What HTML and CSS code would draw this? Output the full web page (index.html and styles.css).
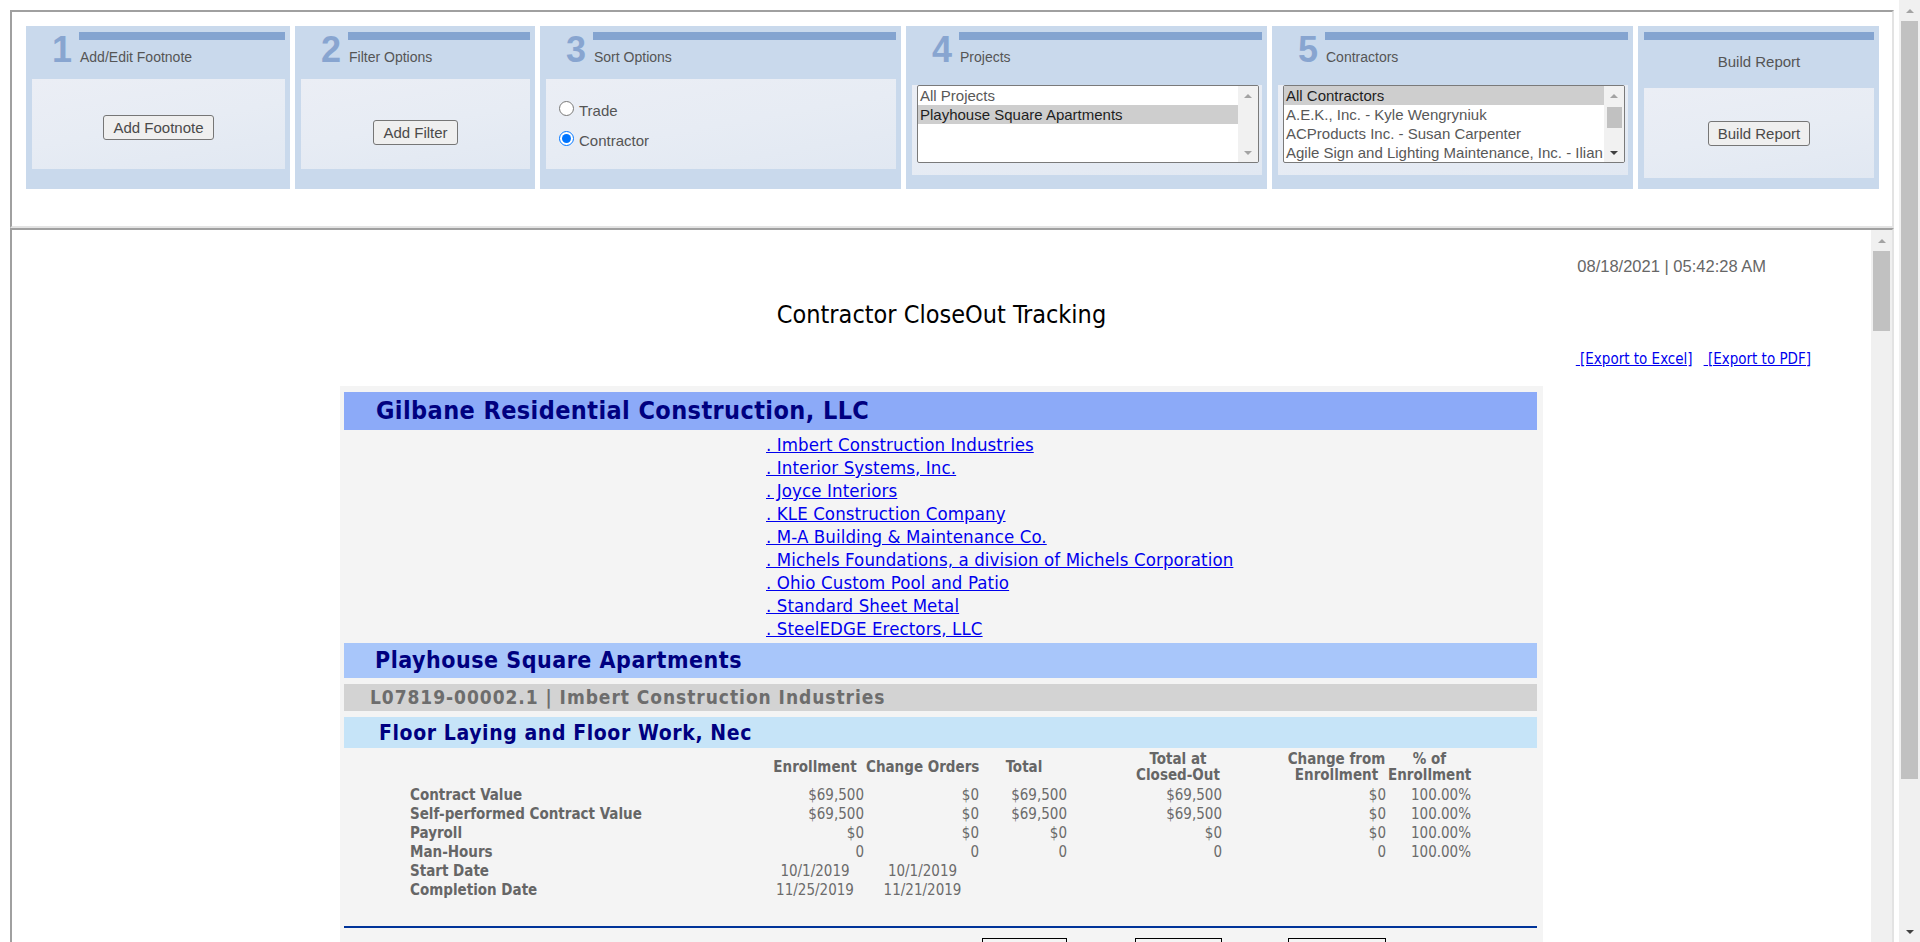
FILE: index.html
```html
<!DOCTYPE html>
<html lang="en">
<head>
<meta charset="utf-8">
<title>Contractor CloseOut Tracking</title>
<link rel="stylesheet" href="styles.css">
</head>
<body>
<div class="viewport">
  <div class="page">
    <div class="frame frame-top">
      <div class="panels">
        <section class="panel w264">
          <div class="phead">
            <div class="pnum">1</div>
            <div class="pside"><div class="stripe"></div><div class="ptitle">Add/Edit Footnote</div></div>
          </div>
          <div class="pbox pbox-center shift-a"><button class="btn" type="button">Add Footnote</button></div>
        </section>
        <section class="panel w240">
          <div class="phead">
            <div class="pnum">2</div>
            <div class="pside"><div class="stripe"></div><div class="ptitle">Filter Options</div></div>
          </div>
          <div class="pbox pbox-center shift-b"><button class="btn" type="button">Add Filter</button></div>
        </section>
        <section class="panel w361">
          <div class="phead">
            <div class="pnum">3</div>
            <div class="pside"><div class="stripe"></div><div class="ptitle">Sort Options</div></div>
          </div>
          <div class="pbox pbox-radio">
            <label class="radio"><input type="radio" name="sort">Trade</label>
            <label class="radio"><input type="radio" name="sort" checked>Contractor</label>
          </div>
        </section>
        <section class="panel w361">
          <div class="phead">
            <div class="pnum">4</div>
            <div class="pside"><div class="stripe"></div><div class="ptitle">Projects</div></div>
          </div>
          <div class="pbox">
            <div class="lb" role="listbox" aria-multiselectable="true">
              <div class="lb-opts">
                <div class="lb-opt" role="option">All Projects</div>
                <div class="lb-opt sel" role="option" aria-selected="true">Playhouse Square Apartments</div>
              </div>
              <div class="lb-bar">
                <div class="lb-btn"><span class="tri-up"></span></div>
                <div class="lb-track"></div>
                <div class="lb-btn"><span class="tri-down"></span></div>
              </div>
            </div>
          </div>
        </section>
        <section class="panel w361">
          <div class="phead">
            <div class="pnum">5</div>
            <div class="pside"><div class="stripe"></div><div class="ptitle">Contractors</div></div>
          </div>
          <div class="pbox">
            <div class="lb" role="listbox" aria-multiselectable="true">
              <div class="lb-opts">
                <div class="lb-opt sel" role="option" aria-selected="true">All Contractors</div>
                <div class="lb-opt" role="option">A.E.K., Inc. - Kyle Wengryniuk</div>
                <div class="lb-opt" role="option">ACProducts Inc. - Susan Carpenter</div>
                <div class="lb-opt" role="option">Agile Sign and Lighting Maintenance, Inc. - Ilian</div>
              </div>
              <div class="lb-bar">
                <div class="lb-btn"><span class="tri-up"></span></div>
                <div class="lb-track"><div class="lb-thumb"></div></div>
                <div class="lb-btn"><span class="tri-down on"></span></div>
              </div>
            </div>
          </div>
        </section>
        <section class="panel w241 panel-build">
          <div class="phead-build">
            <div class="stripe"></div>
            <div class="btitle">Build Report</div>
          </div>
          <div class="pbox pbox-center"><button class="btn" type="button">Build Report</button></div>
        </section>
      </div>
    </div>

    <div class="frame frame-report">
      <div class="report">
        <div class="stamp">08/18/2021 | 05:42:28 AM</div>
        <h1 class="rtitle">Contractor CloseOut Tracking</h1>
        <div class="exports"><a href="#" class="exp">&nbsp;[Export to Excel]</a><a href="#" class="exp pdf">&nbsp;[Export to PDF]</a></div>

        <div class="rtable">
          <div class="bar bar-owner">Gilbane Residential Construction, LLC</div>
          <ul class="subs">
            <li><a href="#">. Imbert Construction Industries</a></li>
            <li><a href="#">. Interior Systems, Inc.</a></li>
            <li><a href="#">. Joyce Interiors</a></li>
            <li><a href="#">. KLE Construction Company</a></li>
            <li><a href="#">. M-A Building &amp; Maintenance Co.</a></li>
            <li><a href="#">. Michels Foundations, a division of Michels Corporation</a></li>
            <li><a href="#">. Ohio Custom Pool and Patio</a></li>
            <li><a href="#">. Standard Sheet Metal</a></li>
            <li><a href="#">. SteelEDGE Erectors, LLC</a></li>
          </ul>
          <div class="bar bar-project">Playhouse Square Apartments</div>
          <div class="bar bar-contract">L07819-00002.1 | Imbert Construction Industries</div>
          <div class="bar bar-trade">Floor Laying and Floor Work, Nec</div>

          <table class="fig">
            <colgroup>
              <col class="c-label"><col class="c-enr"><col class="c-co"><col class="c-tot"><col class="c-sp1"><col class="c-closed"><col class="c-sp2"><col class="c-chg"><col class="c-pct"><col>
            </colgroup>
            <thead>
              <tr class="hrow">
                <th></th>
                <th>Enrollment</th>
                <th>Change Orders</th>
                <th>Total</th>
                <th></th>
                <th>Total at<br>Closed-Out</th>
                <th></th>
                <th>Change from<br>Enrollment</th>
                <th>% of<br>Enrollment</th>
                <th></th>
              </tr>
            </thead>
            <tbody>
              <tr><th>Contract Value</th><td>$69,500</td><td>$0</td><td>$69,500</td><td></td><td>$69,500</td><td></td><td>$0</td><td>100.00%</td><td></td></tr>
              <tr><th>Self-performed Contract Value</th><td>$69,500</td><td>$0</td><td>$69,500</td><td></td><td>$69,500</td><td></td><td>$0</td><td>100.00%</td><td></td></tr>
              <tr><th>Payroll</th><td>$0</td><td>$0</td><td>$0</td><td></td><td>$0</td><td></td><td>$0</td><td>100.00%</td><td></td></tr>
              <tr><th>Man-Hours</th><td>0</td><td>0</td><td>0</td><td></td><td>0</td><td></td><td>0</td><td>100.00%</td><td></td></tr>
              <tr class="drow"><th>Start Date</th><td>10/1/2019</td><td>10/1/2019</td><td></td><td></td><td></td><td></td><td></td><td></td><td></td></tr>
              <tr class="drow"><th>Completion Date</th><td>11/25/2019</td><td>11/21/2019</td><td></td><td></td><td></td><td></td><td></td><td></td><td></td></tr>
            </tbody>
          </table>

          <div class="rule"></div>

          <table class="fig boxes">
            <colgroup>
              <col class="c-label"><col class="c-enr"><col class="c-co"><col class="c-tot"><col class="c-sp1"><col class="c-closed"><col class="c-sp2"><col class="c-chg"><col class="c-pct"><col>
            </colgroup>
            <tbody>
              <tr><td></td><td></td><td></td><td><div class="box"></div></td><td></td><td><div class="box"></div></td><td></td><td><div class="box"></div></td><td></td><td></td></tr>
            </tbody>
          </table>

          <div class="filler"></div>
        </div>
      </div>
      <div class="vscroll frame-scroll" aria-hidden="true">
        <div class="sb-btn"><span class="tri-up"></span></div>
        <div class="sb-track"><div class="sb-thumb frame-thumb"></div></div>
      </div>
    </div>
  </div>

  <div class="vscroll page-scroll" aria-hidden="true">
    <div class="sb-btn"><span class="tri-up"></span></div>
    <div class="sb-track"><div class="sb-thumb page-thumb"></div></div>
    <div class="sb-btn"><span class="tri-down on"></span></div>
  </div>
</div>
</body>
</html>
```

FILE: styles.css
```css
html, body {
  margin: 0;
  padding: 0;
  background: #ffffff;
  overflow: hidden;
}

body {
  font-family: "Liberation Sans", Arial, sans-serif;
  color: #555555;
}

.viewport {
  display: flex;
  height: 942px;
  overflow: hidden;
}

.page {
  flex: 1;
  min-width: 0;
  padding: 10px 0 0 10px;
}

/* ---------- drawn scrollbars (classic look) ---------- */
.vscroll {
  width: 21px;
  flex: none;
  display: flex;
  flex-direction: column;
  background: #f0f0f0;
}

.sb-btn {
  height: 21px;
  flex: none;
  display: flex;
  align-items: center;
  justify-content: center;
}

.sb-track {
  flex: 1;
}

.sb-thumb {
  margin: 0 2px;
  background: #c1c1c1;
}

.page-thumb { height: 758px; }
.frame-thumb { height: 80px; }

/* ---------- frames ---------- */
.frame {
  width: 1884px;
  box-sizing: border-box;
  border-style: solid;
  border-width: 2px;
  border-color: #a0a0a0 #e3e3e3 #e3e3e3 #a0a0a0;
  background: #ffffff;
}

.frame-top {
  height: 218px;
}

.frame-report {
  display: flex;
  height: 883px;
  overflow: hidden;
}

/* ---------- top panels ---------- */
.panels {
  display: flex;
  gap: 5px;
  padding: 14px 0 0 14px;
}

.panel {
  height: 163px;
  box-sizing: border-box;
  padding: 6px 5px 0 6px;
  background: #c9d9ec;
}

.w264 { width: 264px; }
.w240 { width: 240px; }
.w361 { width: 361px; }
.w241 { width: 241px; }

.phead {
  display: flex;
  height: 47px;
}

.pnum {
  width: 47px;
  box-sizing: border-box;
  padding-left: 13px;
  text-align: center;
  font-size: 36px;
  line-height: 36px;
  font-weight: bold;
  color: #88a5d0;
}

.pside {
  flex: 1;
}

.stripe {
  height: 8px;
  background: #84a4d0;
}

.ptitle {
  margin-top: 10px;
  padding-left: 1px;
  font-size: 14px;
  line-height: 15px;
  color: #555555;
  white-space: nowrap;
}

.phead-build {
  height: 56px;
}

.btitle {
  margin-top: 13px;
  text-align: center;
  font-size: 15px;
  line-height: 17px;
  color: #555555;
}

.pbox {
  height: 90px;
  box-sizing: border-box;
  background: linear-gradient(170deg, #ebeef5 0%, #e7ecf4 50%, #e1e8f2 100%);
}

.pbox-center {
  display: flex;
  align-items: center;
  justify-content: center;
}

.shift-a { padding-top: 6px; }
.shift-b { padding-top: 17px; }

.btn {
  height: 25px;
  box-sizing: border-box;
  padding: 0 9px;
  border: 1px solid #767676;
  border-radius: 3px;
  background: #efefef;
  font-family: "Liberation Sans", Arial, sans-serif;
  font-size: 15px;
  line-height: 21px;
  color: #4a4a4a;
}

.pbox-radio {
  padding: 17px 0 0 8px;
}

.radio {
  display: block;
  height: 30px;
  font-size: 15px;
  line-height: 30px;
  color: #555555;
}

.radio input {
  width: 15px;
  height: 15px;
  margin: 3px 5px 0 5px;
}

/* listbox */
.lb {
  display: flex;
  height: 78px;
  box-sizing: border-box;
  margin: 6px 3px 0 5px;
  border: 1px solid #7a7a7a;
  border-radius: 2px;
  background: #ffffff;
  overflow: hidden;
}

.lb-opts {
  flex: 1;
  min-width: 0;
}

.lb-opt {
  height: 19px;
  padding-left: 2px;
  font-size: 15px;
  line-height: 19px;
  white-space: nowrap;
  overflow: hidden;
  color: #585858;
}

.lb-opt.sel {
  background: #cecece;
  color: #1e1e1e;
}

.lb-bar {
  width: 20px;
  display: flex;
  flex-direction: column;
  background: #f1f1f1;
}

.lb-btn {
  height: 19px;
  display: flex;
  align-items: center;
  justify-content: center;
}

.lb-track {
  flex: 1;
}

.lb-thumb {
  height: 21px;
  margin: 2px 2px 0 3px;
  background: #c1c1c1;
}

.tri-up,
.tri-down {
  width: 0;
  height: 0;
  border-left: 4px solid transparent;
  border-right: 4px solid transparent;
}
.tri-up { border-bottom: 4px solid #a3a3a3; }
.tri-down { border-top: 4px solid #a3a3a3; }
.tri-down.on { border-top-color: #404040; }

/* ---------- report ---------- */
.report {
  flex: 1;
  min-width: 0;
  padding-top: 27px;
  font-family: "DejaVu Sans Condensed", "DejaVu Sans", sans-serif;
  font-stretch: condensed;
}

.stamp {
  padding-right: 105px;
  text-align: right;
  font-family: "Liberation Sans", Arial, sans-serif;
  font-size: 16.5px;
  line-height: 18px;
  color: #666666;
}

.rtitle {
  margin: 26px 0 0;
  text-align: center;
  font-size: 25px;
  line-height: 28px;
  font-weight: normal;
  color: #000000;
}

.exports {
  margin-top: 22px;
  padding-right: 60px;
  text-align: right;
  font-size: 15px;
  line-height: 16px;
}

.exp {
  color: #0000ee;
}

.exp.pdf {
  margin-left: 11px;
}

.rtable {
  width: 1203px;
  box-sizing: border-box;
  margin: 19px auto 0;
  padding: 6px 6px 0 4px;
  background: #f4f4f4;
}

.bar {
  font-weight: bold;
  white-space: nowrap;
}

.bar-owner {
  height: 38px;
  padding-left: 32px;
  background: #8caaf8;
  color: #000080;
  font-size: 25px;
  letter-spacing: 0.4px;
  line-height: 38px;
}

.subs {
  list-style: none;
  margin: 3px 0 0;
  padding: 0 0 0 422px;
}

.subs li {
  height: 23px;
  font-size: 18.5px;
  letter-spacing: 0.1px;
  line-height: 23px;
}

.subs a {
  color: #0000ee;
}

.bar-project {
  margin-top: 3px;
  height: 35px;
  padding-left: 31px;
  background: #a8c6fa;
  color: #000080;
  font-size: 23px;
  letter-spacing: 0.5px;
  line-height: 35px;
}

.bar-contract {
  margin-top: 6px;
  height: 27px;
  padding-left: 26px;
  background: #d3d3d3;
  color: #6d6d6d;
  font-size: 19px;
  letter-spacing: 0.95px;
  line-height: 27px;
}

.bar-trade {
  margin-top: 6px;
  height: 31px;
  box-sizing: border-box;
  padding: 1px 0 0 35px;
  background: #c6e4f8;
  color: #000080;
  font-size: 21px;
  letter-spacing: 0.6px;
  line-height: 30px;
}

/* figures */
.fig {
  width: 1193px;
  table-layout: fixed;
  border-collapse: collapse;
  font-size: 15px;
  color: #6b6b6b;
}

.c-label { width: 422px; }
.c-enr { width: 100px; }
.c-co { width: 115px; }
.c-tot { width: 88px; }
.c-sp1 { width: 65px; }
.c-closed { width: 90px; }
.c-sp2 { width: 63px; }
.c-chg { width: 101px; }
.c-pct { width: 85px; }

.fig th,
.fig td {
  padding: 0 2px 0 0;
  white-space: nowrap;
}

.hrow th {
  height: 38px;
  text-align: center;
  vertical-align: middle;
  font-weight: bold;
  line-height: 16px;
  color: #666666;
}

.fig tbody th {
  padding-left: 66px;
  text-align: left;
  font-weight: bold;
  color: #666666;
}

.fig tbody td,
.fig tbody th {
  height: 19px;
  line-height: 19px;
}

.fig tbody td {
  text-align: right;
}

.fig tbody .drow td {
  text-align: center;
}

.rule {
  margin-top: 26px;
  height: 2px;
  background: #003399;
}

.boxes {
  margin-top: 10px;
}

.boxes td {
  height: 26px;
  vertical-align: top;
}

.box {
  height: 26px;
  box-sizing: border-box;
  margin-left: 1px;
  border: 1px solid #000000;
}

.filler {
  height: 300px;
}
```
